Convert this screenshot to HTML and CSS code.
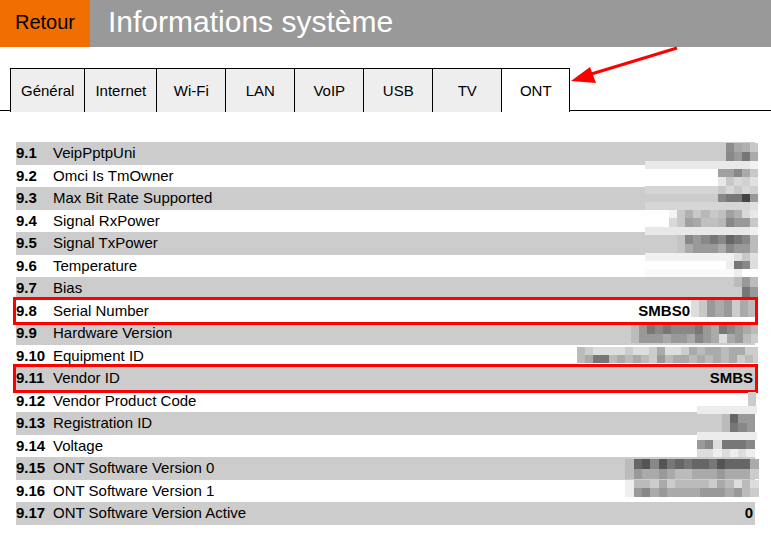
FILE: index.html
```html
<!DOCTYPE html>
<html lang="fr">
<head>
<meta charset="utf-8">
<title>Informations système</title>
<link rel="stylesheet" href="styles.css">
</head>
<body>
<div class="page">
  <header class="topbar">
    <a class="back" href="#">Retour</a>
    <h1 class="title">Informations système</h1>
  </header>

  <nav class="tabs">
    <span class="tab-edge"></span>
    <a class="tab" href="#">Général</a>
    <a class="tab" href="#">Internet</a>
    <a class="tab" href="#">Wi-Fi</a>
    <a class="tab" href="#">LAN</a>
    <a class="tab" href="#">VoIP</a>
    <a class="tab" href="#">USB</a>
    <a class="tab" href="#">TV</a>
    <a class="tab active" href="#">ONT</a>
    <span class="tab-fill"></span>
  </nav>

  <div class="info">
    <div class="row"><span class="num">9.1</span><span class="label">VeipPptpUni</span><span class="value"></span></div>
    <div class="row"><span class="num">9.2</span><span class="label">Omci Is TmOwner</span><span class="value"></span></div>
    <div class="row"><span class="num">9.3</span><span class="label">Max Bit Rate Supported</span><span class="value"></span></div>
    <div class="row"><span class="num">9.4</span><span class="label">Signal RxPower</span><span class="value"></span></div>
    <div class="row"><span class="num">9.5</span><span class="label">Signal TxPower</span><span class="value"></span></div>
    <div class="row"><span class="num">9.6</span><span class="label">Temperature</span><span class="value"></span></div>
    <div class="row"><span class="num">9.7</span><span class="label">Bias</span><span class="value"></span></div>
    <div class="row hl"><span class="num">9.8</span><span class="label">Serial Number</span><span class="value">SMBS0<span class="hidden-part"></span></span></div>
    <div class="row"><span class="num">9.9</span><span class="label">Hardware Version</span><span class="value"></span></div>
    <div class="row"><span class="num">9.10</span><span class="label">Equipment ID</span><span class="value"></span></div>
    <div class="row hl"><span class="num">9.11</span><span class="label">Vendor ID</span><span class="value">SMBS</span></div>
    <div class="row"><span class="num">9.12</span><span class="label">Vendor Product Code</span><span class="value"></span></div>
    <div class="row"><span class="num">9.13</span><span class="label">Registration ID</span><span class="value"></span></div>
    <div class="row"><span class="num">9.14</span><span class="label">Voltage</span><span class="value"></span></div>
    <div class="row"><span class="num">9.15</span><span class="label">ONT Software Version 0</span><span class="value"></span></div>
    <div class="row"><span class="num">9.16</span><span class="label">ONT Software Version 1</span><span class="value"></span></div>
    <div class="row"><span class="num">9.17</span><span class="label">ONT Software Version Active</span><span class="value">0</span></div>
  </div>

  <svg class="overlay" viewBox="0 0 771 536" width="771" height="536" shape-rendering="crispEdges" aria-hidden="true">
    <!-- redaction mosaic -->
    <g>
      <rect x="726" y="143" width="8" height="9" fill="#8c8c8c"/><rect x="734" y="143" width="8" height="9" fill="#a8a8a8"/><rect x="742" y="143" width="8" height="9" fill="#b0b0b0"/><rect x="750" y="143" width="8" height="9" fill="#c8c8c8"/>
      <rect x="726" y="152" width="8" height="9" fill="#888"/><rect x="734" y="152" width="8" height="9" fill="#999"/><rect x="742" y="152" width="8" height="9" fill="#777"/><rect x="750" y="152" width="8" height="9" fill="#aaa"/>
      <rect x="645" y="161" width="105" height="8" fill="#e9e9e9"/><rect x="750" y="161" width="8" height="8" fill="#f2f2f2"/>
      <rect x="718" y="169" width="8" height="8" fill="#a0a0a0"/><rect x="726" y="169" width="8" height="8" fill="#a0a0a0"/><rect x="734" y="169" width="8" height="8" fill="#888"/><rect x="742" y="169" width="8" height="8" fill="#aaa"/><rect x="750" y="169" width="8" height="8" fill="#c8c8c8"/>
      <rect x="718" y="177" width="8" height="9" fill="#e8e8e8"/><rect x="726" y="177" width="8" height="9" fill="#c8c8c8"/><rect x="734" y="177" width="8" height="9" fill="#d8d8d8"/><rect x="742" y="177" width="8" height="9" fill="#d0d0d0"/><rect x="750" y="177" width="8" height="9" fill="#e0e0e0"/>
      <rect x="645" y="186" width="73" height="8" fill="#d5d5d5"/><rect x="718" y="186" width="8" height="8" fill="#c8c8c8"/><rect x="726" y="186" width="8" height="8" fill="#d8d8d8"/><rect x="734" y="186" width="8" height="8" fill="#c8c8c8"/><rect x="742" y="186" width="8" height="8" fill="#d8d8d8"/><rect x="750" y="186" width="8" height="8" fill="#d0d0d0"/>
      <rect x="718" y="194" width="8" height="8" fill="#888"/><rect x="726" y="194" width="8" height="8" fill="#777"/><rect x="734" y="194" width="8" height="8" fill="#777"/><rect x="742" y="194" width="8" height="8" fill="#444"/><rect x="750" y="194" width="8" height="8" fill="#999"/>
      <rect x="645" y="202" width="105" height="8" fill="#d6d6d6"/><rect x="750" y="202" width="8" height="8" fill="#e0e0e0"/>
      <rect x="669" y="210" width="8" height="8" fill="#f4f4f4"/><rect x="677" y="210" width="8" height="8" fill="#c8c8c8"/><rect x="685" y="210" width="8" height="8" fill="#b0b0b0"/><rect x="693" y="210" width="8" height="8" fill="#c8c8c8"/><rect x="701" y="210" width="9" height="8" fill="#b8b8b8"/><rect x="710" y="210" width="8" height="8" fill="#c8c8c8"/><rect x="718" y="210" width="8" height="8" fill="#c0c0c0"/><rect x="726" y="210" width="8" height="8" fill="#a0a0a0"/><rect x="734" y="210" width="8" height="8" fill="#b0b0b0"/><rect x="742" y="210" width="8" height="8" fill="#d8d8d8"/><rect x="750" y="210" width="8" height="8" fill="#e8e8e8"/>
      <rect x="669" y="218" width="8" height="9" fill="#d8d8d8"/><rect x="677" y="218" width="8" height="9" fill="#c8c8c8"/><rect x="685" y="218" width="8" height="9" fill="#a0a0a0"/><rect x="693" y="218" width="8" height="9" fill="#a8a8a8"/><rect x="701" y="218" width="9" height="9" fill="#c0c0c0"/><rect x="710" y="218" width="8" height="9" fill="#c0c0c0"/><rect x="718" y="218" width="8" height="9" fill="#b8b8b8"/><rect x="726" y="218" width="8" height="9" fill="#888"/><rect x="734" y="218" width="8" height="9" fill="#999"/><rect x="742" y="218" width="8" height="9" fill="#999"/><rect x="750" y="218" width="8" height="9" fill="#c8c8c8"/>
      <rect x="645" y="227" width="105" height="8" fill="#e8e8e8"/><rect x="750" y="227" width="8" height="8" fill="#f0f0f0"/>
      <rect x="677" y="235" width="8" height="9" fill="#c4c4c4"/><rect x="685" y="235" width="8" height="9" fill="#888"/><rect x="693" y="235" width="8" height="9" fill="#999"/><rect x="701" y="235" width="9" height="9" fill="#888"/><rect x="710" y="235" width="8" height="9" fill="#777"/><rect x="718" y="235" width="8" height="9" fill="#888"/><rect x="726" y="235" width="8" height="9" fill="#666"/><rect x="734" y="235" width="8" height="9" fill="#777"/><rect x="742" y="235" width="8" height="9" fill="#888"/><rect x="750" y="235" width="8" height="9" fill="#bbb"/>
      <rect x="677" y="244" width="8" height="9" fill="#c4c4c4"/><rect x="685" y="244" width="8" height="9" fill="#aaa"/><rect x="693" y="244" width="8" height="9" fill="#999"/><rect x="701" y="244" width="9" height="9" fill="#999"/><rect x="710" y="244" width="8" height="9" fill="#999"/><rect x="718" y="244" width="8" height="9" fill="#aaa"/><rect x="726" y="244" width="8" height="9" fill="#888"/><rect x="734" y="244" width="8" height="9" fill="#999"/><rect x="742" y="244" width="8" height="9" fill="#999"/><rect x="750" y="244" width="8" height="9" fill="#bbb"/>
      <rect x="645" y="253" width="89" height="8" fill="#f1f1f1"/><rect x="734" y="253" width="8" height="8" fill="#e0e0e0"/><rect x="742" y="253" width="8" height="8" fill="#c8c8c8"/><rect x="750" y="253" width="8" height="8" fill="#e0e0e0"/>
      <rect x="726" y="261" width="8" height="8" fill="#eee"/><rect x="734" y="261" width="8" height="8" fill="#777"/><rect x="742" y="261" width="8" height="8" fill="#888"/><rect x="750" y="261" width="8" height="8" fill="#ddd"/>
      <rect x="645" y="269" width="89" height="8" fill="#fafafa"/><rect x="734" y="269" width="8" height="8" fill="#eee"/>
      <rect x="734" y="277" width="8" height="10" fill="#bbb"/><rect x="742" y="277" width="8" height="10" fill="#999"/><rect x="750" y="277" width="8" height="10" fill="#bbb"/>
      <rect x="734" y="287" width="8" height="10" fill="#ccc"/><rect x="742" y="287" width="8" height="10" fill="#777"/><rect x="750" y="287" width="8" height="10" fill="#999"/>

      <rect x="691" y="300" width="8" height="17" fill="#ddd"/><rect x="699" y="300" width="8" height="17" fill="#c8c8c8"/><rect x="707" y="300" width="8" height="17" fill="#999"/><rect x="715" y="300" width="9" height="17" fill="#aaa"/><rect x="724" y="300" width="8" height="17" fill="#999"/><rect x="732" y="300" width="8" height="17" fill="#ccc"/><rect x="740" y="300" width="8" height="17" fill="#aaa"/><rect x="748" y="300" width="7" height="17" fill="#bbb"/>

      <rect x="631" y="325" width="8" height="9" fill="#bbb"/><rect x="639" y="325" width="8" height="9" fill="#999"/><rect x="647" y="325" width="8" height="9" fill="#777"/><rect x="655" y="325" width="8" height="9" fill="#888"/><rect x="663" y="325" width="8" height="9" fill="#777"/><rect x="671" y="325" width="8" height="9" fill="#888"/><rect x="679" y="325" width="8" height="9" fill="#888"/><rect x="687" y="325" width="8" height="9" fill="#888"/><rect x="695" y="325" width="8" height="9" fill="#777"/><rect x="703" y="325" width="8" height="9" fill="#999"/><rect x="711" y="325" width="8" height="9" fill="#aaa"/><rect x="719" y="325" width="8" height="9" fill="#777"/><rect x="727" y="325" width="8" height="9" fill="#888"/><rect x="735" y="325" width="8" height="9" fill="#999"/><rect x="743" y="325" width="8" height="9" fill="#aaa"/><rect x="751" y="325" width="7" height="9" fill="#bbb"/>
      <rect x="631" y="334" width="8" height="9" fill="#bbb"/><rect x="639" y="334" width="8" height="9" fill="#999"/><rect x="647" y="334" width="8" height="9" fill="#999"/><rect x="655" y="334" width="8" height="9" fill="#999"/><rect x="663" y="334" width="8" height="9" fill="#aaa"/><rect x="671" y="334" width="8" height="9" fill="#999"/><rect x="679" y="334" width="8" height="9" fill="#999"/><rect x="687" y="334" width="8" height="9" fill="#aaa"/><rect x="695" y="334" width="8" height="9" fill="#888"/><rect x="703" y="334" width="8" height="9" fill="#999"/><rect x="711" y="334" width="8" height="9" fill="#aaa"/><rect x="719" y="334" width="8" height="9" fill="#ddd"/><rect x="727" y="334" width="8" height="9" fill="#aaa"/><rect x="735" y="334" width="8" height="9" fill="#999"/><rect x="743" y="334" width="8" height="9" fill="#bbb"/><rect x="751" y="334" width="7" height="9" fill="#ccc"/>

      <rect x="577" y="347" width="8" height="8" fill="#bbb"/><rect x="585" y="347" width="8" height="8" fill="#ccc"/><rect x="593" y="347" width="8" height="8" fill="#ddd"/><rect x="601" y="347" width="8" height="8" fill="#ddd"/><rect x="609" y="347" width="8" height="8" fill="#ddd"/><rect x="617" y="347" width="8" height="8" fill="#ddd"/><rect x="625" y="347" width="8" height="8" fill="#ccc"/><rect x="633" y="347" width="8" height="8" fill="#ddd"/><rect x="641" y="347" width="8" height="8" fill="#ddd"/><rect x="649" y="347" width="8" height="8" fill="#ccc"/><rect x="657" y="347" width="8" height="8" fill="#aaa"/><rect x="665" y="347" width="8" height="8" fill="#ddd"/><rect x="673" y="347" width="8" height="8" fill="#ddd"/><rect x="681" y="347" width="8" height="8" fill="#ccc"/><rect x="689" y="347" width="8" height="8" fill="#aaa"/><rect x="697" y="347" width="8" height="8" fill="#bbb"/><rect x="705" y="347" width="8" height="8" fill="#aaa"/><rect x="713" y="347" width="8" height="8" fill="#aaa"/><rect x="721" y="347" width="8" height="8" fill="#bbb"/><rect x="729" y="347" width="8" height="8" fill="#aaa"/><rect x="737" y="347" width="8" height="8" fill="#aaa"/><rect x="745" y="347" width="8" height="8" fill="#ccc"/><rect x="753" y="347" width="5" height="8" fill="#ccc"/>
      <rect x="577" y="355" width="8" height="8" fill="#bbb"/><rect x="585" y="355" width="8" height="8" fill="#aaa"/><rect x="593" y="355" width="8" height="8" fill="#777"/><rect x="601" y="355" width="8" height="8" fill="#777"/><rect x="609" y="355" width="8" height="8" fill="#bbb"/><rect x="617" y="355" width="8" height="8" fill="#aaa"/><rect x="625" y="355" width="8" height="8" fill="#bbb"/><rect x="633" y="355" width="8" height="8" fill="#aaa"/><rect x="641" y="355" width="8" height="8" fill="#bbb"/><rect x="649" y="355" width="8" height="8" fill="#ccc"/><rect x="657" y="355" width="8" height="8" fill="#999"/><rect x="665" y="355" width="8" height="8" fill="#bbb"/><rect x="673" y="355" width="8" height="8" fill="#aaa"/><rect x="681" y="355" width="8" height="8" fill="#aaa"/><rect x="689" y="355" width="8" height="8" fill="#bbb"/><rect x="697" y="355" width="8" height="8" fill="#aaa"/><rect x="705" y="355" width="8" height="8" fill="#bbb"/><rect x="713" y="355" width="8" height="8" fill="#aaa"/><rect x="721" y="355" width="8" height="8" fill="#bbb"/><rect x="729" y="355" width="8" height="8" fill="#aaa"/><rect x="737" y="355" width="8" height="8" fill="#ccc"/><rect x="745" y="355" width="8" height="8" fill="#bbb"/><rect x="753" y="355" width="5" height="8" fill="#ccc"/>

      <rect x="748" y="392" width="8" height="14" fill="#ccc"/>
      <rect x="697" y="406" width="60" height="8" fill="#ececec"/>
      <rect x="722" y="414" width="8" height="9" fill="#bbb"/><rect x="730" y="414" width="8" height="9" fill="#666"/><rect x="738" y="414" width="9" height="9" fill="#999"/><rect x="747" y="414" width="8" height="9" fill="#999"/>
      <rect x="722" y="423" width="8" height="9" fill="#bbb"/><rect x="730" y="423" width="8" height="9" fill="#777"/><rect x="738" y="423" width="9" height="9" fill="#888"/><rect x="747" y="423" width="8" height="9" fill="#999"/>
      <rect x="697" y="432" width="60" height="8" fill="#ececec"/>
      <rect x="697" y="440" width="8" height="9" fill="#999"/><rect x="705" y="440" width="8" height="9" fill="#888"/><rect x="713" y="440" width="9" height="9" fill="#ddd"/><rect x="722" y="440" width="8" height="9" fill="#777"/><rect x="730" y="440" width="8" height="9" fill="#777"/><rect x="738" y="440" width="8" height="9" fill="#777"/><rect x="746" y="440" width="9" height="9" fill="#888"/>
      <rect x="697" y="449" width="8" height="8" fill="#ddd"/><rect x="705" y="449" width="8" height="8" fill="#ddd"/><rect x="713" y="449" width="9" height="8" fill="#eee"/><rect x="722" y="449" width="8" height="8" fill="#ddd"/><rect x="730" y="449" width="8" height="8" fill="#eee"/><rect x="738" y="449" width="8" height="8" fill="#ddd"/><rect x="746" y="449" width="9" height="8" fill="#eee"/>

      <rect x="625" y="459" width="9" height="10" fill="#bbb"/><rect x="634" y="459" width="8" height="10" fill="#666"/><rect x="642" y="459" width="8" height="10" fill="#555"/><rect x="650" y="459" width="9" height="10" fill="#888"/><rect x="659" y="459" width="8" height="10" fill="#555"/><rect x="667" y="459" width="8" height="10" fill="#777"/><rect x="675" y="459" width="9" height="10" fill="#666"/><rect x="684" y="459" width="8" height="10" fill="#777"/><rect x="692" y="459" width="8" height="10" fill="#666"/><rect x="700" y="459" width="9" height="10" fill="#666"/><rect x="709" y="459" width="8" height="10" fill="#777"/><rect x="717" y="459" width="8" height="10" fill="#555"/><rect x="725" y="459" width="9" height="10" fill="#666"/><rect x="734" y="459" width="8" height="10" fill="#666"/><rect x="742" y="459" width="8" height="10" fill="#666"/><rect x="750" y="459" width="9" height="10" fill="#aaa"/>
      <rect x="617" y="469" width="8" height="10" fill="#ccc"/><rect x="625" y="469" width="9" height="10" fill="#bbb"/><rect x="634" y="469" width="8" height="10" fill="#999"/><rect x="642" y="469" width="8" height="10" fill="#aaa"/><rect x="650" y="469" width="9" height="10" fill="#aaa"/><rect x="659" y="469" width="8" height="10" fill="#999"/><rect x="667" y="469" width="8" height="10" fill="#aaa"/><rect x="675" y="469" width="9" height="10" fill="#bbb"/><rect x="684" y="469" width="8" height="10" fill="#bbb"/><rect x="692" y="469" width="8" height="10" fill="#aaa"/><rect x="700" y="469" width="9" height="10" fill="#aaa"/><rect x="709" y="469" width="8" height="10" fill="#aaa"/><rect x="717" y="469" width="8" height="10" fill="#999"/><rect x="725" y="469" width="9" height="10" fill="#aaa"/><rect x="734" y="469" width="8" height="10" fill="#aaa"/><rect x="742" y="469" width="8" height="10" fill="#aaa"/><rect x="750" y="469" width="9" height="10" fill="#ccc"/>
      <rect x="625" y="480" width="9" height="8" fill="#eee"/><rect x="634" y="480" width="8" height="8" fill="#bbb"/><rect x="642" y="480" width="8" height="8" fill="#bbb"/><rect x="650" y="480" width="9" height="8" fill="#ccc"/><rect x="659" y="480" width="8" height="8" fill="#aaa"/><rect x="667" y="480" width="8" height="8" fill="#ccc"/><rect x="675" y="480" width="9" height="8" fill="#bbb"/><rect x="684" y="480" width="8" height="8" fill="#bbb"/><rect x="692" y="480" width="8" height="8" fill="#bbb"/><rect x="700" y="480" width="9" height="8" fill="#bbb"/><rect x="709" y="480" width="8" height="8" fill="#ccc"/><rect x="717" y="480" width="8" height="8" fill="#aaa"/><rect x="725" y="480" width="9" height="8" fill="#bbb"/><rect x="734" y="480" width="8" height="8" fill="#ddd"/><rect x="742" y="480" width="8" height="8" fill="#bbb"/><rect x="750" y="480" width="9" height="8" fill="#ddd"/>
      <rect x="625" y="488" width="9" height="9" fill="#eee"/><rect x="634" y="488" width="8" height="9" fill="#999"/><rect x="642" y="488" width="8" height="9" fill="#888"/><rect x="650" y="488" width="9" height="9" fill="#aaa"/><rect x="659" y="488" width="8" height="9" fill="#999"/><rect x="667" y="488" width="8" height="9" fill="#aaa"/><rect x="675" y="488" width="9" height="9" fill="#aaa"/><rect x="684" y="488" width="8" height="9" fill="#aaa"/><rect x="692" y="488" width="8" height="9" fill="#aaa"/><rect x="700" y="488" width="9" height="9" fill="#999"/><rect x="709" y="488" width="8" height="9" fill="#999"/><rect x="717" y="488" width="8" height="9" fill="#999"/><rect x="725" y="488" width="9" height="9" fill="#aaa"/><rect x="734" y="488" width="8" height="9" fill="#999"/><rect x="742" y="488" width="8" height="9" fill="#bbb"/><rect x="750" y="488" width="9" height="9" fill="#ccc"/>
    </g>
    <!-- annotation arrow -->
    <g shape-rendering="geometricPrecision" fill="#f00" stroke="none">
      <line x1="677" y1="48" x2="588" y2="75" stroke="#f00" stroke-width="3"/>
      <polygon points="571,81 590,67 596,83"/>
    </g>
  </svg>
</div>
</body>
</html>
```

FILE: styles.css
```css
* { box-sizing: border-box; }

body {
  margin: 0;
  background: #fff;
  color: #000;
  font-family: "Liberation Sans", Arial, Helvetica, sans-serif;
}

.page {
  position: relative;
  width: 771px;
  min-height: 536px;
  overflow: hidden;
}

/* header */
.topbar {
  display: flex;
  height: 47px;
  background: #999;
}

.back {
  width: 90px;
  display: flex;
  align-items: center;
  justify-content: center;
  padding-bottom: 2px;
  background: #f16e00;
  color: #000;
  font-size: 20px;
  text-decoration: none;
}

.title {
  margin: 0;
  padding-left: 18px;
  color: #fff;
  font-size: 30px;
  font-weight: normal;
  line-height: 43px;
}

/* tabs */
.tabs {
  display: flex;
  align-items: flex-end;
  height: 44px;
  margin-top: 21px;
}

.tab-edge {
  width: 10px;
  height: 1px;
  background: #000;
  align-self: flex-end;
  margin-bottom: 1px;
}

.tab-fill {
  flex: 1;
  height: 1px;
  background: #000;
  margin-bottom: 1px;
}

.tab {
  height: 44px;
  min-width: 69px;
  padding: 0 10px;
  display: flex;
  align-items: center;
  justify-content: center;
  background: #eee;
  border-top: 1px solid #000;
  border-left: 1px solid #000;
  color: #000;
  font-size: 15px;
  text-decoration: none;
}

.tab.active {
  background: #fff;
  border-right: 1px solid #000;
}

/* info list */
.info {
  margin: 30px 16px 0;
}

.row {
  display: grid;
  grid-template-columns: 37px 1fr auto;
  align-items: center;
  height: 22.5px;
  font-size: 15px;
  line-height: 22.5px;
}

.row:nth-child(odd) {
  background: #ccc;
}

.row.hl {
  position: relative;
  outline: 3px solid #f00;
}

.num {
  font-weight: bold;
}

.value {
  font-weight: bold;
  padding-right: 2px;
  text-align: right;
}

.hidden-part {
  display: inline-block;
  width: 63px;
}

.overlay {
  position: absolute;
  left: 0;
  top: 0;
  pointer-events: none;
}
```
